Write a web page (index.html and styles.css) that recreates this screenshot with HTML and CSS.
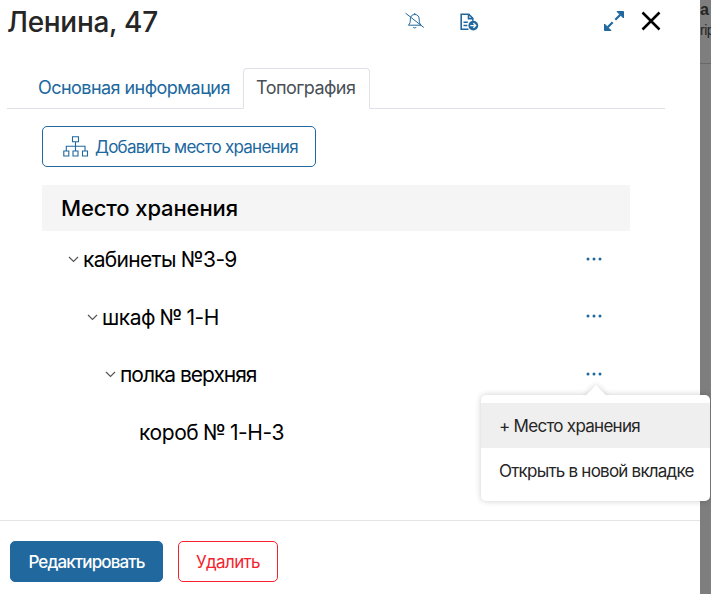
FILE: index.html
```html
<!DOCTYPE html>
<html lang="ru">
<head>
<meta charset="utf-8">
<title>Ленина, 47</title>
<link rel="stylesheet" href="styles.css">
</head>
<body>
<div class="app">
  <main class="modal">
    <header class="header">
      <h1 class="title"><span>Ленина, 47</span></h1>
      <div class="tools">
        <svg class="bell" width="20" height="18" viewBox="0 0 20 18" fill="none" stroke="#20689e" stroke-width="1"><path d="M3.300 13.200h12.900c-1.700-1.500-2-2.800-2-6C14.200 4.300 12.500 2.500 9.750 2.500S5.300 4.300 5.300 7.200c0 3.200-.3 4.500-2 6zM9.750 1v1.500M8.200 15c.5 1.300 2.600 1.300 3.100 0"/><path d="M.6 1.200l18.200 14.300"/></svg>
        <svg class="doc" width="19" height="19" viewBox="0 0 19 19" fill="none" stroke="#20689e" stroke-width="1.6"><path d="M8.500 16.200H1.200V1.300h7.600l4 4v2.500M8.500 1.300v4.300h4.300M3.500 9.200h4.300M3.500 12.500h3.800"/><circle cx="13.300" cy="12.600" r="4.900" fill="#20689e" stroke="none"/><path d="M10.300 12.600h5M13.400 10.300l2.300 2.300-2.300 2.300" stroke="#fff" stroke-width="1.300"/></svg>
        <svg class="expand" width="20" height="20" viewBox="0 0 20 20"><path d="M11.300 8.700l5-5M8.700 11.300l-5 5" stroke="#20689e" stroke-width="2.200"/><path d="M13 .5h6.500V7zM.5 13v6.500H7z" fill="#20689e" stroke="#20689e"/></svg>
        <svg class="close" width="20" height="20" viewBox="0 0 20 20"><path d="M1.500 1.500l17 17M18.500 1.500l-17 17" stroke="#000" stroke-width="2.500"/></svg>
      </div>
    </header>
    <nav class="tabs">
      <a class="tab"><span>Основная информация</span></a>
      <a class="tab active"><span>Топография</span></a>
    </nav>
    <section class="content">
      <button class="btn add"><svg width="26" height="21" viewBox="0 0 26 21" fill="none" stroke="#20689e" stroke-width="1.1"><path d="M9.500.7h6v5h-6zM.8 15h5v5h-5zM10 15h5v5h-5zM19.500 15h5v5h-5zM12.500 5.700V15M3.300 15v-4.700h18.700V15"/></svg><span>Добавить место хранения</span></button>
      <h2 class="list-head"><span>Место хранения</span></h2>
      <ul class="tree">
        <li class="row level-1"><svg class="chevron" width="11" height="7" viewBox="0 0 11 7"><path d="M1 1l4.500 4.500L10 1"/></svg><span class="name n1">кабинеты №3-9</span><svg class="dots" width="16" height="4" viewBox="0 0 16 4"><circle cx="2" cy="2" r="1.500"/><circle cx="8" cy="2" r="1.500"/><circle cx="14" cy="2" r="1.500"/></svg></li>
        <li class="row level-2"><svg class="chevron" width="11" height="7" viewBox="0 0 11 7"><path d="M1 1l4.500 4.500L10 1"/></svg><span class="name n2">шкаф № 1-Н</span><svg class="dots" width="16" height="4" viewBox="0 0 16 4"><circle cx="2" cy="2" r="1.500"/><circle cx="8" cy="2" r="1.500"/><circle cx="14" cy="2" r="1.500"/></svg></li>
        <li class="row level-3"><svg class="chevron" width="11" height="7" viewBox="0 0 11 7"><path d="M1 1l4.500 4.500L10 1"/></svg><span class="name n3">полка верхняя</span><svg class="dots" width="16" height="4" viewBox="0 0 16 4"><circle cx="2" cy="2" r="1.500"/><circle cx="8" cy="2" r="1.500"/><circle cx="14" cy="2" r="1.500"/></svg></li>
        <li class="row level-4"><span class="name n4">короб № 1-Н-3</span></li>
      </ul>
    </section>
    <footer class="footer">
      <button class="btn primary"><span>Редактировать</span></button>
      <button class="btn danger"><span>Удалить</span></button>
    </footer>
  </main>
  <aside class="behind"><div class="peek"><b>а</b><span>rip</span></div></aside>
  <div class="menu">
    <a class="item hovered"><span>+ Место хранения</span></a>
    <a class="item"><span>Открыть в новой вкладке</span></a>
  </div>
</div>
</body>
</html>
```
FILE: styles.css
```css
* { box-sizing: border-box; }
body { margin: 0; font-family: Inter, "Liberation Sans", sans-serif; color: #262626; }
span { white-space: nowrap; }
.app { position: relative; display: flex; width: 711px; height: 594px; overflow: hidden; background: #7e7e7e; }
.modal { display: flex; flex-direction: column; width: 700px; background: #fff; }
.header { display: flex; justify-content: space-between; height: 68px; padding: 0 39px 0 7px; }
.title { margin: 0; font-size: 28px; line-height: 44px; font-weight: 500; letter-spacing: -.3px; }
.tools { display: flex; align-items: flex-start; }
.bell { margin: 12px 35px 0 0; }
.doc { margin: 13px 125px 0 0; }
.expand { margin: 11px 17px 0 0; }
.close { margin: 11px 0 0; }
.tabs { display: flex; height: 41px; margin: 0 35px 0 7px; padding-left: 17px; border-bottom: 1px solid #dee2e6; }
.tab { width: 219px; height: 41px; padding-left: 14px; font-size: 18px; line-height: 40px; letter-spacing: -.55px; color: #20689e; }
.active { width: 127px; padding-left: 12px; line-height: 38px; border: 1px solid #dee2e6; border-bottom-color: #fff; border-radius: 4px 4px 0 0; background: #fff; color: #495057; }
.content { height: 411px; padding: 17px 70px 0 42px; }
.btn { display: flex; align-items: center; justify-content: center; height: 41px; padding: 0; border: 1px solid #20689e; border-radius: 5px; background: #fff; color: #20689e; font: 17px Inter, sans-serif; letter-spacing: -.4px; }
.add { width: 274px; justify-content: flex-start; padding-left: 20px; gap: 6px; letter-spacing: -.75px; }
.add span { padding-top: 1px; }
.list-head { height: 46px; margin: 18px 0 0; padding-left: 19px; background: #f5f5f5; color: #000; font-size: 22px; line-height: 46px; font-weight: 500; letter-spacing: -.12px; }
.tree { margin: 0; padding: 0; list-style: none; color: #000; }
.row { display: flex; align-items: center; height: 57.600px; padding-right: 28px; font-size: 21px; }
.level-1 { padding-left: 26px; }
.level-2 { padding-left: 45px; }
.level-3 { padding-left: 63px; }
.level-4 { padding-left: 97px; }
.n1 { letter-spacing: -.7px; }
.n2 { letter-spacing: -.45px; word-spacing: -1px; }
.n3 { letter-spacing: -1.020px; }
.n4 { letter-spacing: -.4px; word-spacing: -1px; }
.chevron { margin-right: 4px; fill: none; stroke: #555; stroke-width: 1.200; }
.dots { margin: 0 0 2px auto; fill: #20689e; }
.footer { display: flex; gap: 15px; height: 74px; padding: 20px 10px; border-top: 1px solid #e5e5e5; }
.primary { width: 153px; background: #20689e; color: #fff; font-weight: 500; letter-spacing: -.87px; }
.danger { width: 100px; border-color: #f5222d; color: #f5222d; letter-spacing: -.65px; }
.behind { width: 11px; overflow: hidden; }
.peek { display: flex; flex-direction: column; height: 64px; border-bottom: 1px solid #686868; font: 14px/20px "Liberation Sans", sans-serif; color: #252525; }
.peek span { letter-spacing: -.5px; }
.peek b { font-size: 16px; }
.menu { position: absolute; left: 481px; top: 395px; width: 229px; height: 106px; padding-top: 8px; background: #fff; border-radius: 5px; box-shadow: 0 0 6px rgba(0,0,0,.2); }
.menu::before { content: ""; position: absolute; left: 108px; top: -7px; width: 14px; height: 14px; background: #fff; box-shadow: 0 0 6px rgba(0,0,0,.18); transform: rotate(45deg); clip-path: polygon(-6px -6px, 20px -6px, -6px 20px); }
.item { display: block; height: 45px; padding-left: 18px; font-size: 17px; line-height: 46px; letter-spacing: -.78px; }
.hovered { background: #efefef; letter-spacing: -.72px; }
```
